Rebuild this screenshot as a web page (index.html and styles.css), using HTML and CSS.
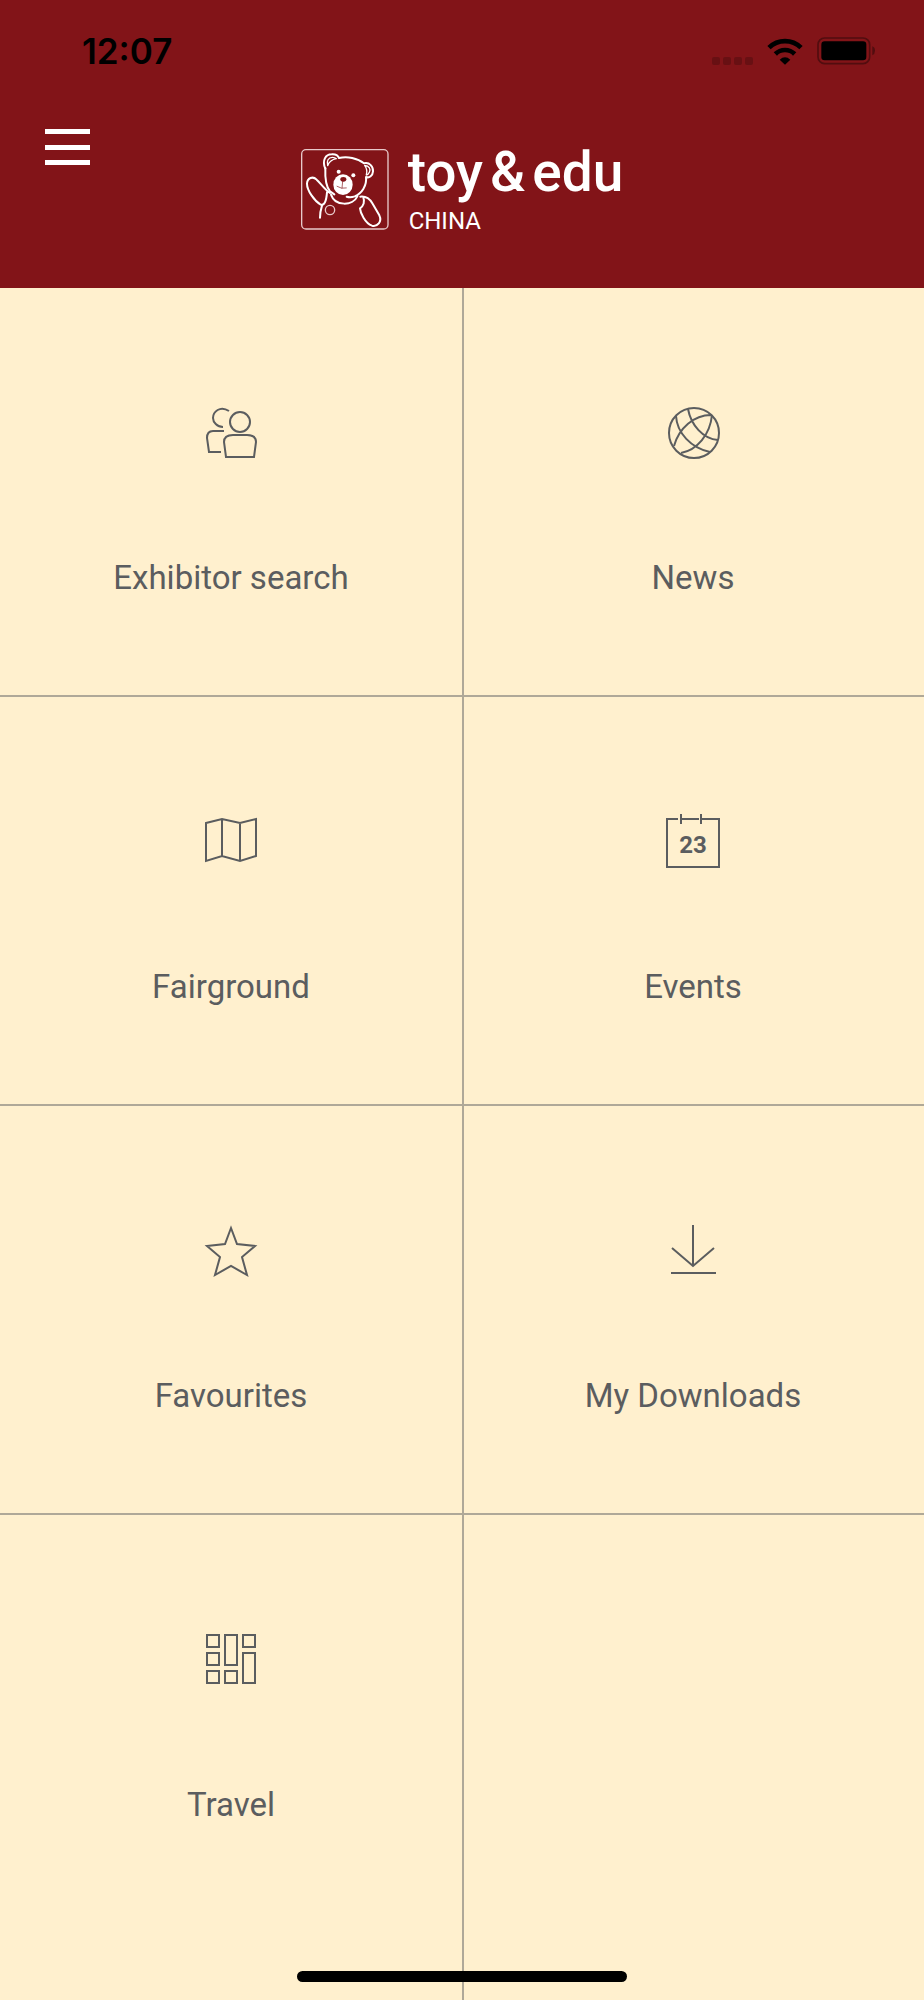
FILE: index.html
```html
<!DOCTYPE html>
<html lang="en">
<head>
<meta charset="utf-8">
<meta name="viewport" content="width=device-width, initial-scale=1">
<title>toy &amp; edu China</title>
<link rel="stylesheet" href="styles.css">
</head>
<body>
<div class="app">
  <header class="header">
    <div class="status">
      <time class="clock">12:07</time>
      <div class="indicators">
        <span class="signal"><i></i><i></i><i></i><i></i></span>
        <svg class="wifi" width="36" height="27" viewBox="0 0 108 81" aria-hidden="true">
          <g fill="none" stroke="#000" stroke-width="14">
            <path d="M6 29A68 68 0 0 1 102 29"/>
            <path d="M25 48A41 41 0 0 1 83 48"/>
          </g>
          <path d="M54 80 38 65Q54 51 70 65Z"/>
        </svg>
        <svg class="battery" width="59" height="28" viewBox="0 0 177 84" aria-hidden="true">
          <rect x="3" y="3" width="155" height="77" rx="20" fill="none" stroke="#520d0f" stroke-width="5"/>
          <rect x="13" y="13" width="135" height="57" rx="10"/>
          <path d="M166 28Q174 31 174 41T166 55Z" fill="#520d0f"/>
        </svg>
      </div>
    </div>
    <div class="bar">
      <button class="menu" type="button" aria-label="Menu"><span></span><span></span><span></span></button>
      <a class="brand" href="#">
        <svg width="88" height="81" viewBox="32 41 264 243" fill="none" stroke="#fff" stroke-width="6" stroke-linecap="round" stroke-linejoin="round" aria-hidden="true">
          <rect x="34" y="43" width="259" height="238" rx="13" stroke-width="4" stroke="#e8c9ca"/>
          <path d="M105 100C94 75 106 57 124 57C135 56 143 61 146 68C170 62 202 68 221 84C238 80 249 94 248 108C247 121 237 129 227 125C230 150 215 174 193 183C184 186 176 186 169 184"/>
          <path d="M105 98C104 122 105 151 119 168L132 177"/>
          <path d="M112 91C108 77 114 66 126 66C132 66 136 68 138 70C126 72 116 80 112 91ZM223 90C237 91 242 102 237 111C234 118 231 119 228 119C231 108 229 98 223 90Z" stroke-width="4"/>
          <path d="M119 173C103 162 90 143 79 133C67 121 51 128 50 145C50 166 73 197 90 207C102 213 108 197 110 171M95 211Q89 230 89 247"/>
          <path d="M122 178C134 214 188 212 201 183M210 184C228 182 238 190 246 204L267 240C276 259 261 275 245 271C224 264 210 232 209 219C220 212 224 198 219 187"/>
          <circle cx="119" cy="224" r="14" stroke-width="4" stroke="#e8c9ca"/>
          <g stroke="none">
            <circle cx="145" cy="109" r="6" fill="#fff"/>
            <circle cx="189" cy="120" r="6" fill="#fff"/>
            <ellipse cx="158" cy="148" rx="29" ry="31" fill="#fff"/>
            <ellipse cx="159" cy="132" rx="9" ry="7" fill="#821418"/>
          </g>
          <path d="M157 138 155 158M140 153Q153 162 168 158" stroke="#821418" stroke-width="2"/>
        </svg>
        <span class="wordmark">
          <span class="name"><span>toy</span><span>&amp;</span><span>edu</span></span>
          <span class="country">CHINA</span>
        </span>
      </a>
    </div>
  </header>

  <main class="grid">
    <a class="tile" href="#">
      <svg class="icon" viewBox="0 0 54 54" aria-hidden="true">
        <circle cx="36" cy="17" r="10"/>
        <path d="M29 30H43Q52 30 52 37L50 52H22L20 37Q20 30 29 30ZM25 6C16 0 9 7 9 13C9 17 13 22 19 22M20 26H9Q3 26 3 33L5 47H17"/>
      </svg>
      <span class="label">Exhibitor search</span>
    </a>
    <a class="tile" href="#">
      <svg class="icon" viewBox="0 0 54 54" aria-hidden="true">
        <circle cx="28" cy="28" r="25"/>
        <path d="M22 4C25 20 37 34 52 35M45 10C28 10 13 23 8 41M10 11C11 28 25 43 44 47M46 10C44 30 31 45 15 48"/>
      </svg>
      <span class="label">News</span>
    </a>
    <a class="tile" href="#">
      <svg class="icon" viewBox="0 0 54 54" aria-hidden="true">
        <path d="M2 9 18 5 36 9 52 5V42L36 47 18 42 2 47ZM18 5V42M36 9V47"/>
      </svg>
      <span class="label">Fairground</span>
    </a>
    <a class="tile" href="#">
      <svg class="icon" viewBox="0 0 54 54" aria-hidden="true">
        <path d="M12 5H1V53H53V5H36M33 5H16M15 0V10M35 0V10"/>
        <text class="date" x="27" y="39">23</text>
      </svg>
      <span class="label">Events</span>
    </a>
    <a class="tile" href="#">
      <svg class="icon" viewBox="0 0 54 54" aria-hidden="true">
        <path d="M27 5 33 21 51 23 38 34 43 52 27 43 11 52 16 34 3 23 21 21Z"/>
      </svg>
      <span class="label">Favourites</span>
    </a>
    <a class="tile" href="#">
      <svg class="icon" viewBox="0 0 54 54" aria-hidden="true">
        <path d="M27 2V43M6 25 27 43 48 25M5 50H50"/>
      </svg>
      <span class="label">My Downloads</span>
    </a>
    <a class="tile" href="#">
      <svg class="icon" viewBox="0 0 54 54" aria-hidden="true">
        <path d="M3 3H15V15H3ZM21 3H33V33H21ZM39 3H51V15H39ZM3 21H15V33H3ZM39 21H51V51H39ZM3 39H15V51H3ZM21 39H33V51H21Z"/>
      </svg>
      <span class="label">Travel</span>
    </a>
    <div class="tile"></div>
  </main>
  <div class="home"></div>
</div>
</body>
</html>
```
FILE: styles.css
```css
* { box-sizing: border-box; }

body {
  margin: 0;
  background: #fff0ce;
  color: #5b5d5f;
  font-family: Roboto, "Liberation Sans", sans-serif;
}

a { color: inherit; text-decoration: none; }

.app {
  min-height: 100vh;
  display: flex;
  flex-direction: column;
}

.header {
  background: #821418;
  color: #fff;
  padding-bottom: 55px;
}

.status {
  display: flex;
  justify-content: space-between;
  align-items: center;
  padding: 31px 48px 0 82px;
}

.clock {
  font: 600 35px/40px Inter, sans-serif;
  color: #000;
}

.indicators { display: flex; align-items: center; }

.signal {
  display: flex;
  gap: 3px;
  align-self: flex-end;
  margin-right: 14px;
}

.signal i {
  width: 8px;
  height: 8px;
  border-radius: 2px;
  background: #681013;
}

.wifi { margin-right: 14px; }

.bar {
  display: grid;
  grid-template-columns: 1fr auto 1fr;
  padding: 58px 45px 0;
}

.menu {
  width: 45px;
  height: 36px;
  padding: 0;
  border: 0;
  background: none;
  display: flex;
  flex-direction: column;
  justify-content: space-between;
}

.menu span { width: 100%; height: 5px; background: #fff; }

.brand {
  display: flex;
  gap: 19px;
  padding-top: 20px;
}

.wordmark { display: flex; flex-direction: column; }

.name {
  display: flex;
  gap: 7px;
  font-size: 55px;
  font-weight: 500;
  line-height: 46px;
}

.country {
  font-size: 24px;
  line-height: 24px;
  margin-top: 14px;
  padding-left: 1px;
}

.grid {
  flex: 1;
  display: grid;
  grid-template-columns: 1fr 1fr;
  grid-template-rows: repeat(3, 409px) 1fr;
}

.tile {
  display: flex;
  flex-direction: column;
  align-items: center;
  gap: 99px;
  padding: 117px 0 60px;
  border-bottom: 2px solid #afa898;
}

.tile:nth-child(even) {
  padding-right: 2px;
  border-left: 2px solid #afa898;
}

.tile:nth-last-child(-n+2) { border-bottom: 0; }

.icon {
  width: 54px;
  height: 54px;
  flex: none;
  overflow: visible;
  fill: none;
  stroke: #5b5d5f;
  stroke-width: 2;
}

.date {
  fill: #5b5d5f;
  stroke: none;
  font-size: 24px;
  font-weight: 700;
  text-anchor: middle;
}

.label { font-size: 33px; line-height: 40px; }

.home {
  position: fixed;
  bottom: 18px;
  left: 50%;
  width: 330px;
  height: 11px;
  margin-left: -165px;
  border-radius: 6px;
  background: #000;
}
```
